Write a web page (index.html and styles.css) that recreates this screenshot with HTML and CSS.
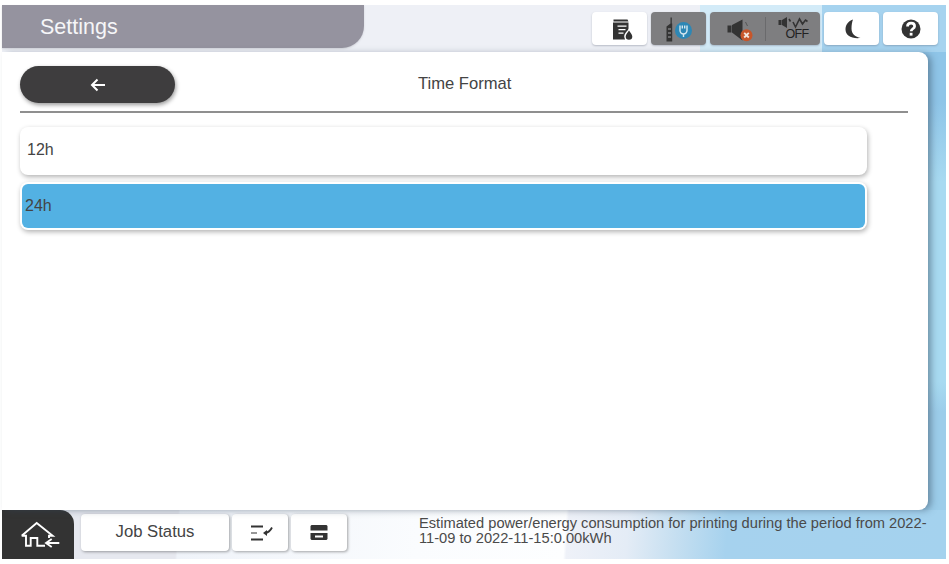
FILE: index.html
```html
<!DOCTYPE html>
<html lang="en">
<head>
<meta charset="utf-8">
<title>Time Format</title>
<link rel="stylesheet" href="styles.css">
</head>
<body>
<div class="screen">
  <header class="topbar">
    <div class="title">Settings</div>
    <div class="status">
      <div class="tab">
        <svg width="30" height="24" viewBox="0 0 30 24"><path class="ink" d="M8.500 2.500h14l1 2h-15zM8 5.500h15.500v7l-3 5-.5 5H8z"/><path class="cut" d="M12.500 8.500h9v1.300h-9zM13.500 12h7v1.300h-7zM13.500 15.500h5v1.300h-5z"/><path class="cut" d="M24 11.500c-1.500 2.500-4.800 5-4.800 8a4.800 4.800 0 0 0 9.600 0c0-3-3.300-5.500-4.800-8z"/><path class="ink" d="M24 13.500c-1.200 2-3.300 3.800-3.300 6a3.300 3.300 0 0 0 6.600 0c0-2.200-2.100-4-3.300-6z"/></svg>
      </div>
      <div class="tab tab-dim">
        <svg width="34" height="28" viewBox="0 0 34 28"><path class="ink" d="M8.500 2.500h1.300v6h.4v18H4.500v-15l4-3z"/><path class="dots" d="M6 14h3M6 18h3M6 22h3"/><circle cx="21.500" cy="15.500" r="8.500" fill="#2d87b5"/><path class="plug" d="M18 10.500v5a3.500 3.500 0 0 0 7 0v-5M21.500 19v3M20.300 10.500v3M22.700 10.500v3"/></svg>
      </div>
      <div class="tab tab-dim tab-wide">
        <div class="half">
          <svg width="30" height="28" viewBox="0 0 30 28"><path class="ink" d="M4.500 10.500h4v7h-4zM9 10l10.500-5.500v21L9 17.500z"/><path class="soft" d="M22.500 7l2 4"/><circle cx="23.500" cy="20.200" r="6" fill="#c7562a"/><path class="cross" d="M21.200 17.900l4.600 4.600M25.800 17.900l-4.600 4.600"/></svg>
        </div>
        <div class="half half-off">
          <svg width="34" height="13" viewBox="0 0 34 13"><path class="ink" d="M2.500 3h3v5h-3zM6 3l5-3v11L6 8z"/><path class="wave" d="M13 2l1.500 2.500M17 5l2.500 5 4-8 3 5 3-4 2 1.500"/></svg>
          <span class="off">OFF</span>
        </div>
      </div>
      <div class="tab">
        <svg width="24" height="28" viewBox="0 0 24 28"><path class="ink" d="M13 4.500C7.500 6.500 5.500 10.500 5.500 14.500c0 5.500 5.500 9.500 15 8.500-5-1-9-4-9-9.500 0-3.500.5-6.500 1.500-9z"/></svg>
      </div>
      <div class="tab">
        <svg width="22" height="22" viewBox="0 0 22 22"><circle class="ink" cx="11" cy="11" r="9.500"/><path class="help" d="M7.500 8.500c0-2 1.600-3.300 3.600-3.300s3.500 1.200 3.500 3c0 2.600-3.400 2.500-3.400 5"/><rect x="9.700" y="14.800" width="2.800" height="2.800" fill="#fff"/></svg>
      </div>
    </div>
  </header>

  <div class="middle">
    <main class="panel">
      <div class="panel-head">
        <button class="back" type="button" aria-label="Back">
          <svg width="16" height="14" viewBox="0 0 16 14"><path class="arrow" d="M15 7H2M7.500 1.500L2 7l5.500 5.500"/></svg>
        </button>
        <h1 class="heading">Time Format</h1>
      </div>
      <div class="rule"></div>
      <ul class="options">
        <li class="option">12h</li>
        <li class="option option-on"><span class="fill">24h</span></li>
      </ul>
    </main>
  </div>

  <footer class="bottombar">
    <button class="home" type="button" aria-label="Home">
      <svg width="42" height="30" viewBox="0 0 42 30"><path class="line" d="M1.700 15.700L16.700 3l16 12.700H29V18M1.700 15.700H6v10h4.700V18h6.600v7.700H25"/><path class="line" d="M39.300 23H26M31.700 19L26 23l5.700 4"/></svg>
    </button>
    <button class="tool tool-job" type="button">Job Status</button>
    <button class="tool" type="button" aria-label="Job list">
      <svg width="26" height="18" viewBox="0 0 26 18"><path class="ink" d="M4 1.500h12v2H4zM4 14.500h12v2H4zM4 8.500h6v1H4z"/><path class="check" d="M25 3.500C23.500 6.500 22 8.500 18 9"/><path class="ink" d="M16 9l4-3v6z"/></svg>
    </button>
    <button class="tool" type="button" aria-label="Paper trays">
      <svg width="18" height="15" viewBox="0 0 18 15"><path class="ink" fill-rule="evenodd" d="M1.500 0h15l1 1v4.500H.5V1zM.5 8h17v6l-1 1h-15l-1-1zM5 10.500v2h8v-2z"/></svg>
    </button>
    <p class="energy">Estimated power/energy consumption for printing during the period from 2022-11-09 to 2022-11-15:0.00kWh</p>
  </footer>
</div>
</body>
</html>
```

FILE: styles.css
```css
* { box-sizing: border-box; }
html, body { margin: 0; padding: 0; background: #fff; }
body { width: 949px; height: 564px; overflow: hidden; padding: 5px 3px 5px 2px; font-family: "Liberation Sans", Arial, sans-serif; color: #444; }
button { font: inherit; color: inherit; border: 0; padding: 0; }
.screen { height: 554px; display: flex; flex-direction: column; }

.topbar { height: 47px; flex: none; display: flex; justify-content: space-between; background: #eef0f6; }
.title { width: 362px; height: 43px; padding: 8px 0 0 38px; background: #95939f; border-radius: 0 0 22px 0; color: #f6f6f8; font-size: 21.500px; line-height: 28px; box-shadow: 0 1px 2px rgba(120,120,130,.25); }
.status { position: relative; display: flex; gap: 4px; padding: 7px 8px 0 0; }
.status::before { content: ""; position: absolute; top: 0; right: 0; bottom: 0; width: 246px; background: #d3ebf8; }
.status::after { content: ""; position: absolute; top: 0; right: 0; bottom: 0; width: 124px; background: #a6d3ef; }
.tab { position: relative; z-index: 1; width: 55px; height: 33px; background: #fff; border-radius: 4px; display: flex; align-items: center; justify-content: center; box-shadow: 0 1px 2px rgba(80,90,110,.35); }
.tab-dim { background: #7e7e80; }
.tab-wide { width: 110px; }
.half { width: 55px; height: 33px; display: flex; flex-direction: column; align-items: center; justify-content: center; }
.half-off { position: relative; }
.half-off::before { content: ""; position: absolute; left: 0; top: 5px; bottom: 4px; width: 1px; background: #6a6a6c; }
.off { font-size: 12.500px; line-height: 11px; letter-spacing: -.7px; color: #222; margin: -1px 0 0 9px; }

.ink { fill: #333; }
.cut { fill: #fff; }
.dots { stroke: #7e7e80; stroke-width: 1.300; fill: none; }
.plug { stroke: #d6e8f0; stroke-width: 1.400; fill: none; }
.soft { stroke: #555; stroke-width: 1; fill: none; }
.cross { stroke: #f3e7df; stroke-width: 1.800; fill: none; }
.wave { stroke: #333; stroke-width: 1.600; fill: none; }
.help { stroke: #fff; stroke-width: 2.700; fill: none; }
.arrow { stroke: #fff; stroke-width: 2; fill: none; }
.line { stroke: #fff; stroke-width: 1.900; fill: none; }
.check { stroke: #333; stroke-width: 1.800; fill: none; }

.middle { flex: 1; min-height: 0; display: flex; background: linear-gradient(180deg, #8fc5e8 0, #8fc5e8 50px, #a8daf1 130px, #a8daf1 330px, #9ccdea 360px, #9ccdea 100%); }
.panel { flex: 1; margin-right: 18px; padding: 14px 20px 0 18px; background: #fff; border-radius: 0 9px 9px 0; box-shadow: 4px 1px 7px -1px rgba(50,70,90,.5); position: relative; z-index: 1; }
.panel-head { position: relative; height: 45px; display: flex; align-items: flex-start; }
.back { width: 155px; height: 37px; background: #3e3d3e; border-radius: 19px; display: flex; align-items: center; justify-content: center; box-shadow: 1px 2px 4px rgba(0,0,0,.4); }
.heading { position: absolute; left: 398px; top: 8px; margin: 0; font-size: 16.600px; font-weight: 400; line-height: 20px; color: #444; }
.rule { height: 2px; background: #8f8f8f; }
.options { list-style: none; margin: 14px 0 0; padding: 0; width: 847px; display: flex; flex-direction: column; gap: 7px; }
.option { height: 48px; padding-left: 7px; background: #fff; border-radius: 8px; font-size: 16px; line-height: 46px; box-shadow: 1px 2px 5px rgba(0,0,0,.3); }
.option-on { padding: 2px; }
.fill { display: block; height: 44px; padding-left: 3px; background: #53b1e3; border-radius: 6px; line-height: 44px; }

.bottombar { height: 49px; flex: none; display: flex; align-items: flex-start; background: linear-gradient(94deg, #e6e8ef 0, #e6e8ef 176px, #eff3f9 178px, #fafcfe 415px, #fdfeff 563px, #eef1f8 566px, #e4ecf6 625px, #c8e0f1 670px, #a6d2ee 725px, #a4d2ee 100%); }
.home { width: 72px; height: 49px; background: #333; border-radius: 0 14px 0 0; display: flex; align-items: center; justify-content: center; padding-left: 6px; }
.tool { width: 56px; height: 37px; margin: 4px 0 0 3px; background: #fff; border-radius: 4px; display: flex; align-items: center; justify-content: center; box-shadow: 1px 1px 3px rgba(0,0,0,.35); }
.tool-job { width: 148px; margin-left: 7px; padding-bottom: 2px; font-size: 16.700px; }
.energy { margin: 6px 0 0 72px; width: 520px; font-size: 14.660px; line-height: 15px; color: #4a4a4a; }
```
